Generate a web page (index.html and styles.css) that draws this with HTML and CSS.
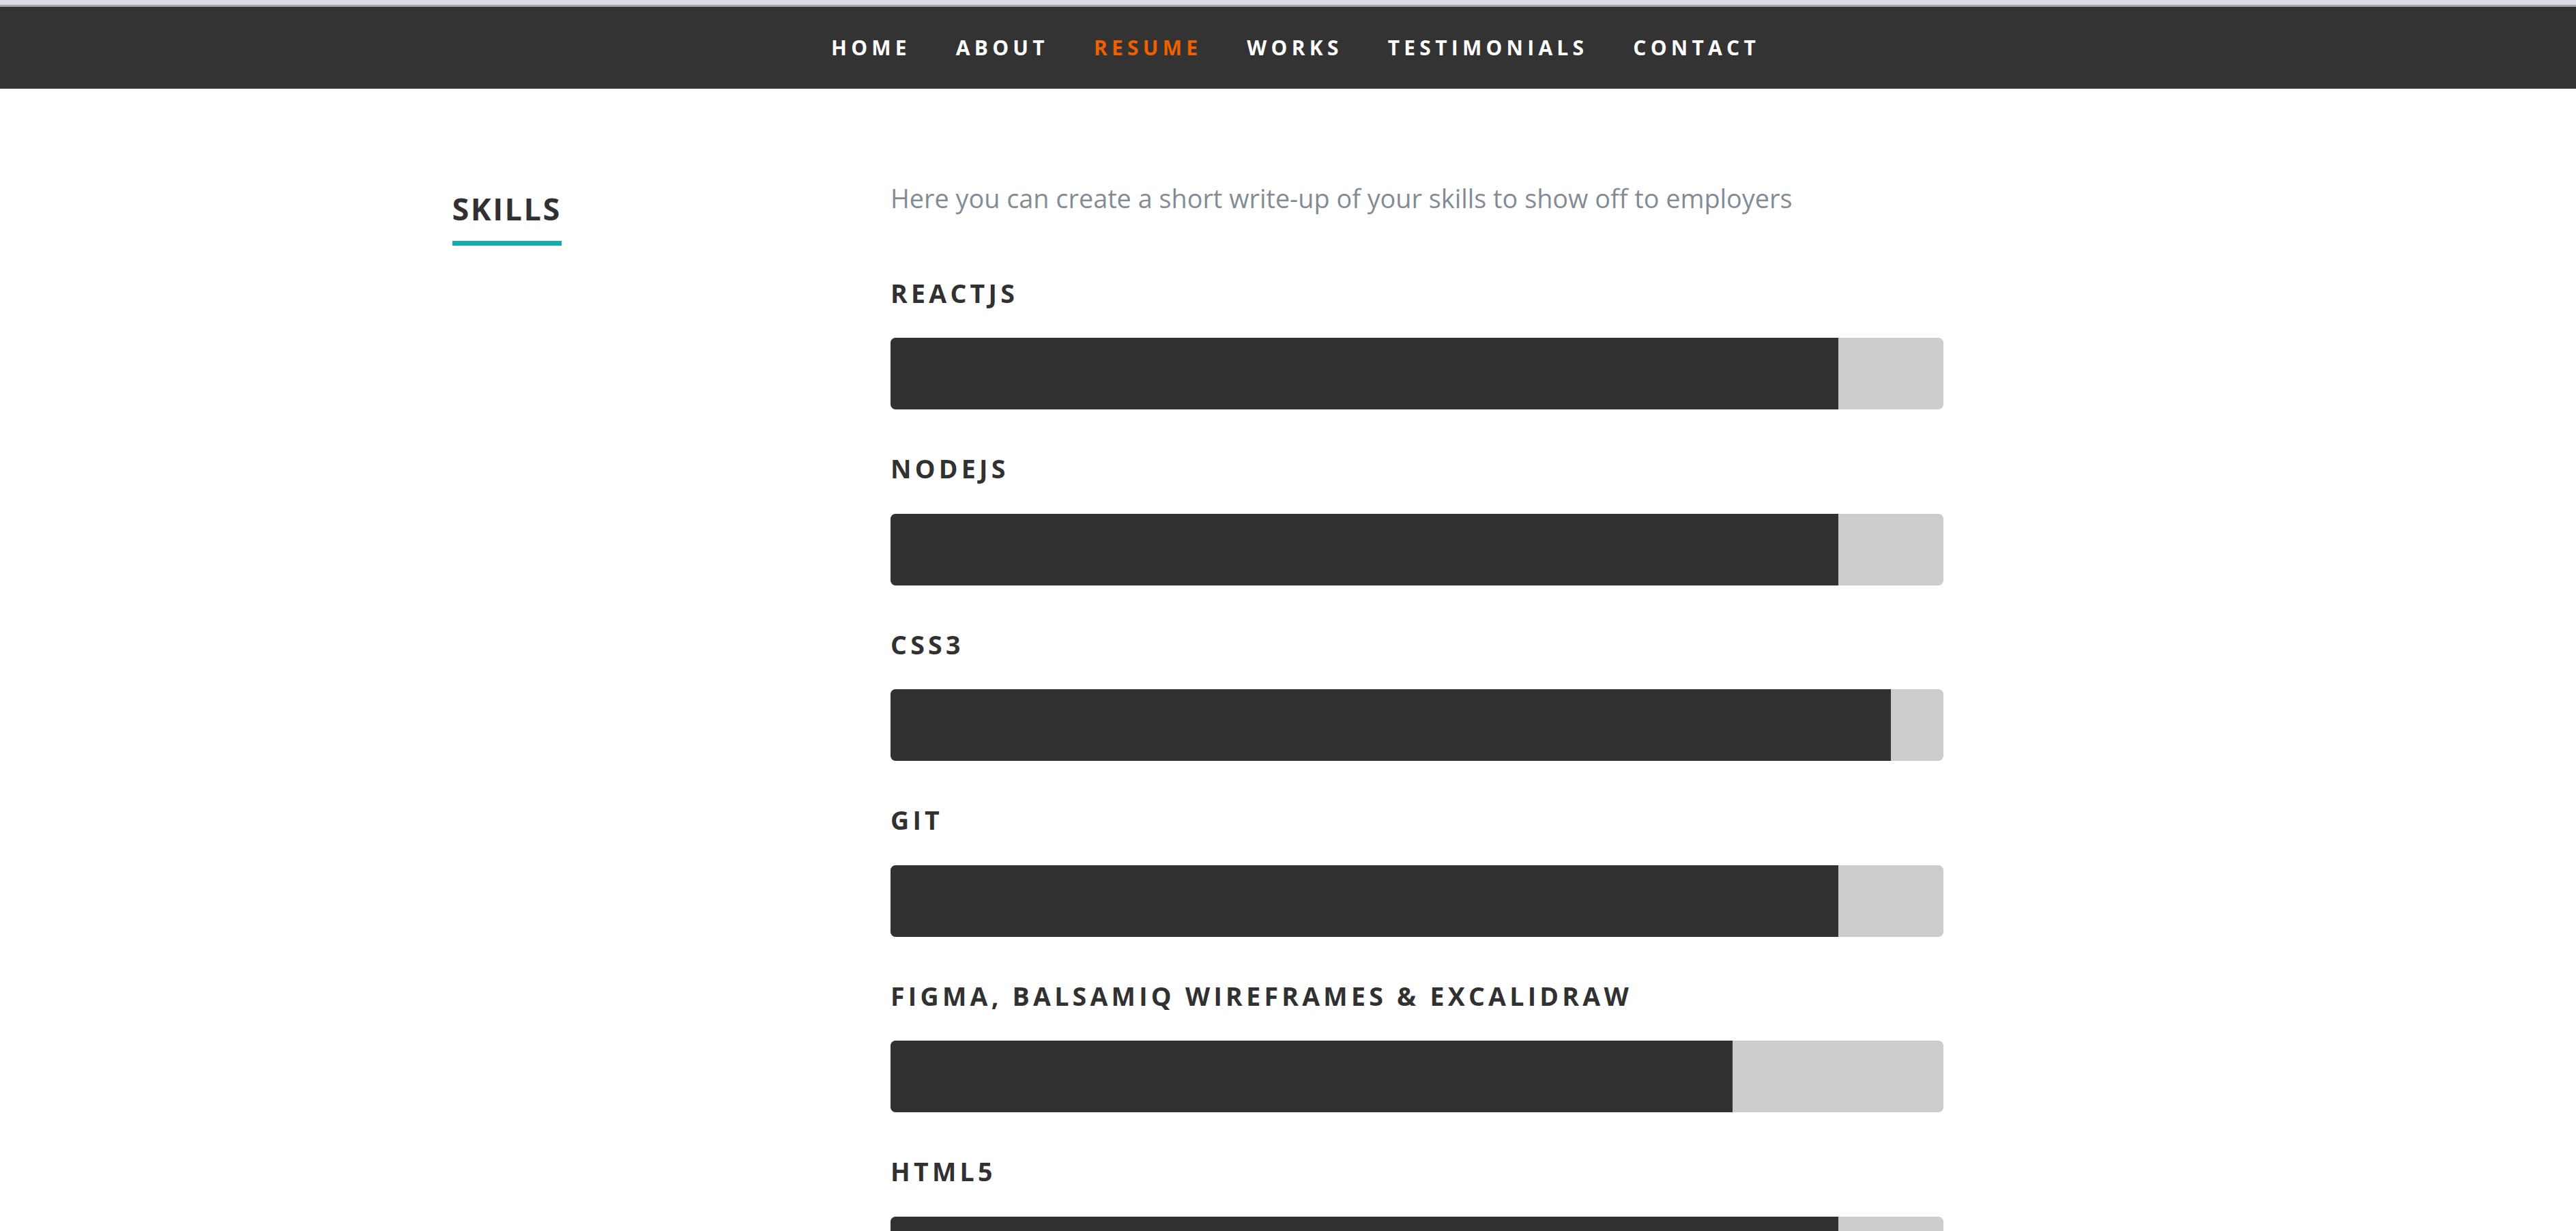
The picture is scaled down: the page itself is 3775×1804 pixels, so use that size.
FILE: index.html
```html
<!DOCTYPE html>
<html lang="en">
<head>
<meta charset="utf-8">
<title>Resume – Skills</title>
<link rel="stylesheet" href="styles.css">
</head>
<body>
<div class="chrome"></div>
<nav class="nav">
  <ul class="nav-list">
    <li><a class="nav-link" href="#home">Home</a></li>
    <li><a class="nav-link" href="#about">About</a></li>
    <li><a class="nav-link current" href="#resume">Resume</a></li>
    <li><a class="nav-link" href="#works">Works</a></li>
    <li><a class="nav-link" href="#testimonials">Testimonials</a></li>
    <li><a class="nav-link" href="#contact">Contact</a></li>
  </ul>
</nav>
<section class="resume">
  <div class="row">
    <div class="header-col">
      <h1 class="section-title"><span class="section-title-text">Skills</span></h1>
    </div>
    <div class="main-col">
      <p class="lead">Here you can create a short write-up of your skills to show off to employers</p>
      <ul class="skills">
        <li class="skill"><em class="skill-name">ReactJS</em><div class="bar"><span class="bar-fill" style="width:90%"></span></div></li>
        <li class="skill"><em class="skill-name">NodeJS</em><div class="bar"><span class="bar-fill" style="width:90%"></span></div></li>
        <li class="skill"><em class="skill-name">CSS3</em><div class="bar"><span class="bar-fill" style="width:95%"></span></div></li>
        <li class="skill"><em class="skill-name">Git</em><div class="bar"><span class="bar-fill" style="width:90%"></span></div></li>
        <li class="skill"><em class="skill-name">Figma, Balsamiq Wireframes &amp; Excalidraw</em><div class="bar"><span class="bar-fill" style="width:80%"></span></div></li>
        <li class="skill"><em class="skill-name">HTML5</em><div class="bar"><span class="bar-fill" style="width:90%"></span></div></li>
      </ul>
    </div>
  </div>
</section>
</body>
</html>
```
FILE: styles.css
```css
html, body {
  margin: 0;
  padding: 0;
  overflow: hidden;
  background: #fff;
}
body {
  font-family: "Open Sans", "Liberation Sans", sans-serif;
}
.chrome {
  height: 7px;
  background: #dadbe0;
  border-bottom: 3px solid #a4a5a8;
}
.nav {
  height: 120px;
  background: #333;
}
.nav-list {
  list-style: none;
  margin: 0;
  padding: 0 0 0 22px;
  display: flex;
  justify-content: center;
}
.nav-link {
  display: block;
  padding: 20px 33px;
  line-height: 80px;
  font-size: 30px;
  font-weight: 700;
  letter-spacing: 6.25px;
  text-transform: uppercase;
  color: #fff;
  text-decoration: none;
}
.nav-link.current {
  color: #f06000;
}
.row {
  width: 2550px;
  margin: 0 auto;
  display: flex;
  align-items: flex-start;
}
.header-col {
  width: 642.5px;
  box-sizing: border-box;
  padding: 145.5px 0 0 50px;
}
.section-title {
  margin: 0;
  font-size: 45px;
  font-weight: 700;
  line-height: 60px;
  letter-spacing: 2.5px;
  text-transform: uppercase;
  color: #313131;
}
.section-title-text {
  display: inline-block;
  padding-bottom: 17.5px;
  border-bottom: 7.5px solid #11abb0;
}
.main-col {
  width: 1543px;
  padding: 130.5px 0 0 50px;
}
.lead {
  margin: 0 0 84px;
  font-size: 37.8px;
  line-height: 60px;
  color: #838c95;
}
.skills {
  list-style: none;
  margin: 0;
  padding: 0;
  display: flex;
  flex-direction: column;
  gap: 62px;
}
.skill {
  display: flex;
  flex-direction: column;
  gap: 40.5px;
}
.skill-name {
  font-style: normal;
  font-size: 37.5px;
  line-height: 50px;
  font-weight: 700;
  letter-spacing: 5.25px;
  text-transform: uppercase;
  color: #313131;
}
.bar {
  height: 105px;
  background: #ccc;
  border-radius: 7.5px;
}
.bar-fill {
  display: block;
  height: 100%;
  background: #313131;
  border-radius: 7.5px 0 0 7.5px;
}
```
